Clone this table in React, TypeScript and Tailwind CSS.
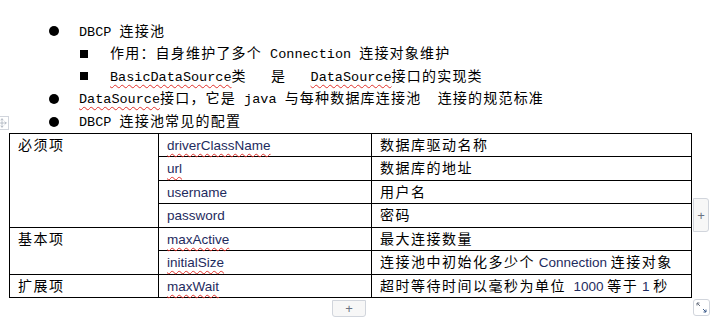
import { Move } from "lucide-react";

const cjk = "'Noto Sans CJK SC', sans-serif";
const mono = "'Liberation Mono', 'Noto Sans CJK SC', monospace";
const sans = "'Liberation Sans', 'Noto Sans CJK SC', sans-serif";

function Squiggle({ children }: { children: React.ReactNode }) {
  return (
    <span className="underline decoration-wavy decoration-[#e0302a] decoration-1 underline-offset-[3px]">
      {children}
    </span>
  );
}

function Mono({ children }: { children: React.ReactNode }) {
  return (
    <span className="text-[13.5px] tracking-normal" style={{ fontFamily: mono }}>
      {children}
    </span>
  );
}

function En({ children }: { children: React.ReactNode }) {
  return (
    <span className="text-[13.5px] tracking-normal text-[#1e2b5e]" style={{ fontFamily: sans }}>
      {children}
    </span>
  );
}

function Dot() {
  return <span className="w-[30px] shrink-0 flex items-center"><span className="w-[10px] h-[10px] rounded-full bg-black" /></span>;
}

function Square() {
  return <span className="w-[30px] shrink-0 flex items-center"><span className="w-[8px] h-[8px] bg-black" /></span>;
}

const cell = "border border-black align-top px-[8px] h-[23.5px] leading-[21px] text-[14px] tracking-[1.5px] text-black";

export default function App() {
  return (
    <div className="relative w-[721px] h-[320px] bg-white overflow-hidden" style={{ fontFamily: cjk }}>
      <div className="pt-[20px] text-[14px] tracking-[1.2px] text-black">
        <div className="flex items-center h-[22.6px] pl-[49px]">
          <Dot />
          <span className="whitespace-pre"><Mono>DBCP </Mono>连接池</span>
        </div>
        <div className="flex items-center h-[22.6px] pl-[80px]">
          <Square />
          <span className="whitespace-pre">作用：自身维护了多个<Mono> Connection </Mono>连接对象维护</span>
        </div>
        <div className="flex items-center h-[22.6px] pl-[80px]">
          <Square />
          <span className="whitespace-pre">
            <Mono><Squiggle>BasicDataSource</Squiggle></Mono>类<Mono>   </Mono>是<Mono>   </Mono>
            <Mono><Squiggle>DataSource</Squiggle></Mono>接口的实现类
          </span>
        </div>
        <div className="flex items-center h-[22.6px] pl-[49px]">
          <Dot />
          <span className="whitespace-pre">
            <Mono><Squiggle>DataSource</Squiggle></Mono>接口，它是<Mono> java </Mono>与每种数据库连接池<Mono>  </Mono>连接的规范标准
          </span>
        </div>
        <div className="flex items-center h-[22.6px] pl-[49px]">
          <Dot />
          <span className="whitespace-pre"><Mono>DBCP </Mono>连接池常见的配置</span>
        </div>
      </div>

      <table className="ml-[9px] border-collapse w-[682px] table-fixed">
        <colgroup>
          <col className="w-[149px]" />
          <col className="w-[213px]" />
          <col className="w-[320px]" />
        </colgroup>
        <tbody>
          <tr>
            <td rowSpan={4} className={cell}>必须项</td>
            <td className={cell}><En><Squiggle>driverClassName</Squiggle></En></td>
            <td className={cell}>数据库驱动名称</td>
          </tr>
          <tr>
            <td className={cell}><En><Squiggle>url</Squiggle></En></td>
            <td className={cell}>数据库的地址</td>
          </tr>
          <tr>
            <td className={cell}><En>username</En></td>
            <td className={cell}>用户名</td>
          </tr>
          <tr>
            <td className={cell}><En>password</En></td>
            <td className={cell}>密码</td>
          </tr>
          <tr>
            <td rowSpan={2} className={cell}>基本项</td>
            <td className={cell}><En><Squiggle>maxActive</Squiggle></En></td>
            <td className={cell}>最大连接数量</td>
          </tr>
          <tr>
            <td className={cell}><En><Squiggle>initialSize</Squiggle></En></td>
            <td className={`${cell} whitespace-pre`}>连接池中初始化多少个<En> Connection </En>连接对象</td>
          </tr>
          <tr>
            <td className={cell}>扩展项</td>
            <td className={cell}><En><Squiggle>maxWait</Squiggle></En></td>
            <td className={`${cell} whitespace-pre`}>超时等待时间以毫秒为单位<En>  1000 </En>等于<En> 1 </En>秒</td>
          </tr>
        </tbody>
      </table>

      {/* table handles */}
      <div className="absolute left-[-5px] top-[116px] w-[14px] h-[14px] border border-gray-300 bg-white flex items-center justify-center text-gray-400">
        <Move size={10} strokeWidth={1.5} />
      </div>
      <div className="absolute left-[693px] top-[198px] w-[16px] h-[34px] border border-gray-300 rounded-r-[3px] bg-[#f7f7f7] flex items-center justify-center text-gray-500 text-[13px] leading-none" style={{ fontFamily: sans }}>
        +
      </div>
      <div className="absolute left-[332px] top-[300px] w-[34px] h-[17px] border border-gray-300 rounded-b-[3px] bg-[#f7f7f7] flex items-center justify-center text-gray-500 text-[13px] leading-none" style={{ fontFamily: sans }}>
        +
      </div>
      <div className="absolute left-[693px] top-[299px] w-[17px] h-[17px] border border-gray-300 rounded-[3px] bg-white flex items-center justify-center">
        <svg width="11" height="11" viewBox="0 0 11 11" fill="none" stroke="#6b7280" strokeWidth="1">
          <path d="M1 1 L4 4 M1 1 L1 3.5 M1 1 L3.5 1" />
          <path d="M10 10 L7 7 M10 10 L10 7.5 M10 10 L7.5 10" stroke="#3b5b8a" />
        </svg>
      </div>
    </div>
  );
}
